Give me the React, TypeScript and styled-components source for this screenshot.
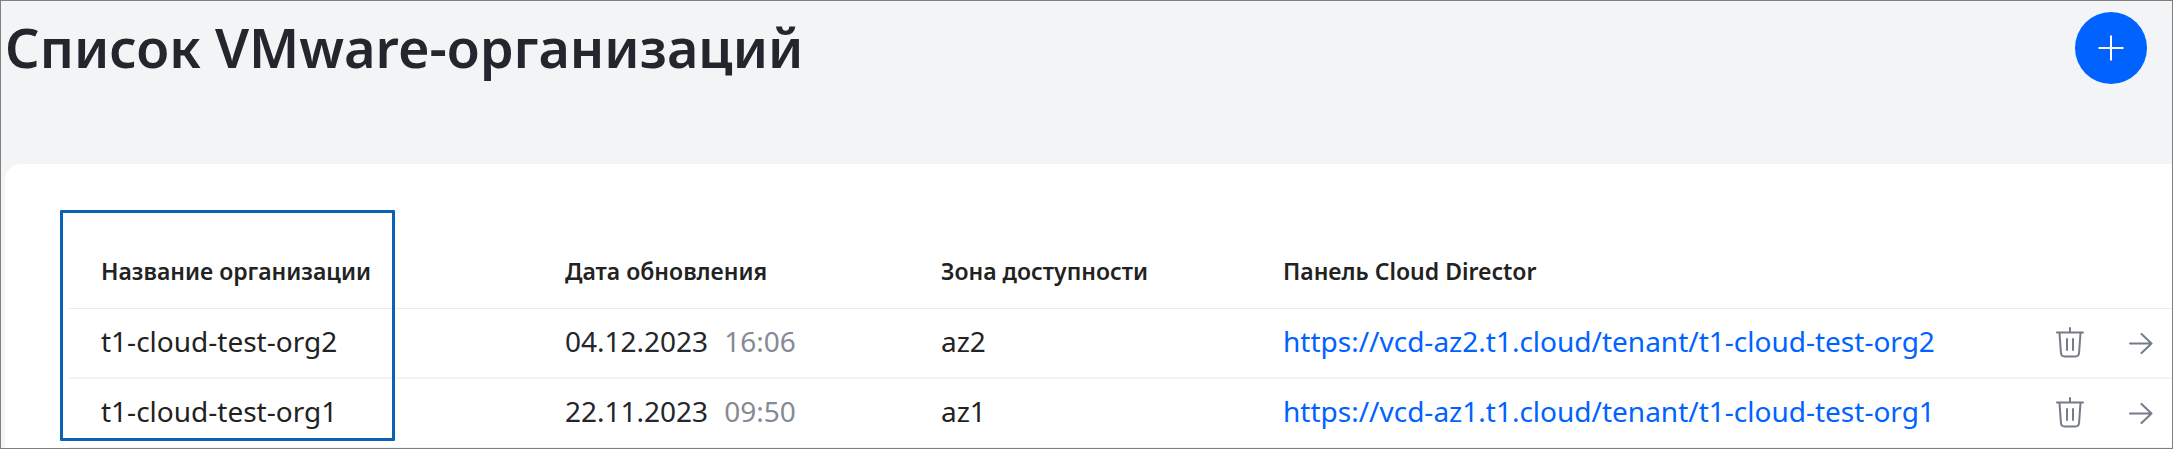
import React from "react";
import styled, { createGlobalStyle } from "styled-components";

const GlobalStyle = createGlobalStyle`
  *, *::before, *::after { box-sizing: border-box; }
  body {
    margin: 0;
    background: #f3f4f6;
    font-family: "Noto Sans", "Open Sans", sans-serif;
    color: #222222;
  }
`;

const Page = styled.main`
  display: flex;
  flex-direction: column;
  min-height: 100vh;
  border: 1px solid #808080;
  background: #f3f4f6;
`;

const Header = styled.header`
  display: flex;
  justify-content: space-between;
  align-items: flex-start;
  padding: 11px 25px 80px 4px;
`;

const Title = styled.h1`
  margin: 0;
  font-size: 54px;
  line-height: 70px;
  font-weight: 600;
  color: #23262d;
`;

const AddButton = styled.button`
  display: flex;
  align-items: center;
  justify-content: center;
  flex: none;
  width: 72px;
  height: 72px;
  padding: 0;
  border: 0;
  border-radius: 50%;
  background: #0062ff;
  color: #ffffff;
  cursor: pointer;
`;

const Panel = styled.section`
  flex: 1;
  margin-left: 4px;
  padding: 64px 0 0 64px;
  border-top-left-radius: 16px;
  background: #ffffff;
`;

const TableArea = styled.div`
  position: relative;
`;

const Table = styled.table`
  width: 100%;
  table-layout: fixed;
  border-collapse: separate;
  border-spacing: 0;
`;

const Column = styled.col<{ $width?: number }>`
  width: ${({ $width }) => ($width ? `${$width}px` : "auto")};
`;

const HeadCell = styled.th`
  height: 81px;
  padding: 6px 0 0 32px;
  border-bottom: 1px solid #ebebed;
  font-size: 23px;
  line-height: 32px;
  font-weight: 600;
  text-align: left;
  white-space: nowrap;
`;

const Cell = styled.td<{ $action?: boolean }>`
  height: 70px;
  padding: ${({ $action }) => ($action ? "0 0 2px" : "0 0 4px 32px")};
  border-bottom: 2px solid #f3f4f6;
  font-size: 28px;
  line-height: 40px;
  white-space: nowrap;

  tr:last-child > & {
    height: 69px;
    border-bottom-width: 1px;
  }
`;

const Updated = styled.time`
  display: flex;
  gap: 16px;
  color: #23262d;
`;

const Hours = styled.span`
  color: #858a96;
`;

const PanelLink = styled.a`
  color: #0062ff;
  text-decoration: none;
`;

const IconButton = styled.button`
  display: flex;
  padding: 0;
  border: 0;
  background: none;
  color: #767b88;
  cursor: pointer;
`;

const Highlight = styled.div`
  position: absolute;
  top: -18px;
  bottom: 7px;
  left: -9px;
  width: 335px;
  border: 3px solid #0a62b5;
  border-radius: 1px;
  pointer-events: none;
`;

const PlusIcon = () => (
  <svg width="26" height="26" viewBox="0 0 26 26" fill="none" stroke="currentColor" strokeWidth="2" aria-hidden="true">
    <path d="M13 0.5V25.5M0.5 13H25.5" />
  </svg>
);

const TrashIcon = () => (
  <svg width="28" height="32" viewBox="0 0 28 32" fill="none" stroke="currentColor" strokeWidth="2" strokeLinecap="round" aria-hidden="true">
    <path d="M1 6.5H27M14 2V6" />
    <path d="M3.5 7L4.9 26.5Q5.2 30.5 8.5 30.5H19.5Q22.8 30.5 23.1 26.5L24.5 7" />
    <path d="M11 13V24M17 13V24" />
  </svg>
);

const ArrowIcon = () => (
  <svg width="24" height="24" viewBox="0 0 24 24" fill="none" stroke="currentColor" strokeWidth="2" strokeLinecap="round" strokeLinejoin="round" aria-hidden="true">
    <path d="M1 13.5H22.5M12.5 4L22.5 13.5L12.5 23" />
  </svg>
);

const organizations = [
  { name: "t1-cloud-test-org2", date: "04.12.2023", time: "16:06", zone: "az2" },
  { name: "t1-cloud-test-org1", date: "22.11.2023", time: "09:50", zone: "az1" },
];

export default function App() {
  return (
    <>
      <GlobalStyle />
      <Page>
        <Header>
          <Title>Список VMware-организаций</Title>
          <AddButton type="button" aria-label="Добавить организацию">
            <PlusIcon />
          </AddButton>
        </Header>
        <Panel>
          <TableArea>
            <Table>
              <colgroup>
                <Column $width={464} />
                <Column $width={376} />
                <Column $width={342} />
                <Column />
                <Column $width={73} />
                <Column $width={43} />
              </colgroup>
              <thead>
                <tr>
                  <HeadCell scope="col">Название организации</HeadCell>
                  <HeadCell scope="col">Дата обновления</HeadCell>
                  <HeadCell scope="col">Зона доступности</HeadCell>
                  <HeadCell scope="col" colSpan={3}>Панель Cloud Director</HeadCell>
                </tr>
              </thead>
              <tbody>
                {organizations.map(({ name, date, time, zone }) => {
                  const url = `https://vcd-${zone}.t1.cloud/tenant/${name}`;
                  return (
                    <tr key={name}>
                      <Cell>{name}</Cell>
                      <Cell>
                        <Updated>
                          {date}
                          <Hours>{time}</Hours>
                        </Updated>
                      </Cell>
                      <Cell>{zone}</Cell>
                      <Cell>
                        <PanelLink href={url}>{url}</PanelLink>
                      </Cell>
                      <Cell $action>
                        <IconButton type="button" aria-label={`Удалить ${name}`}>
                          <TrashIcon />
                        </IconButton>
                      </Cell>
                      <Cell $action>
                        <IconButton type="button" aria-label={`Открыть ${name}`}>
                          <ArrowIcon />
                        </IconButton>
                      </Cell>
                    </tr>
                  );
                })}
              </tbody>
            </Table>
            <Highlight />
          </TableArea>
        </Panel>
      </Page>
    </>
  );
}
